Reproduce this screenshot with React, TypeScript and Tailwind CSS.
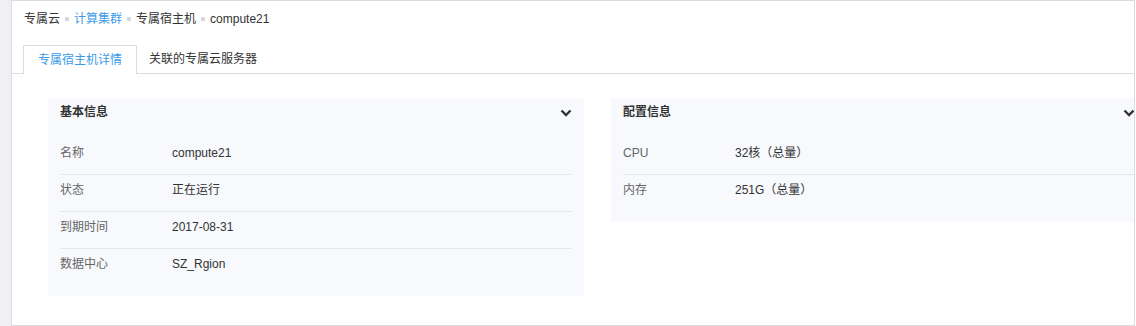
import React from "react";

type Row = { label: string; value: string };

const basicRows: Row[] = [
  { label: "名称", value: "compute21" },
  { label: "状态", value: "正在运行" },
  { label: "到期时间", value: "2017-08-31" },
  { label: "数据中心", value: "SZ_Rgion" },
];

const configRows: Row[] = [
  { label: "CPU", value: "32核（总量）" },
  { label: "内存", value: "251G（总量）" },
];

function Chevron() {
  return (
    <svg width="12" height="8" viewBox="0 0 12 8" className="shrink-0">
      <polyline
        points="1.5,1.5 6,6 10.5,1.5"
        fill="none"
        stroke="#333"
        strokeWidth="2.4"
      />
    </svg>
  );
}

function Dot() {
  return <span className="mx-[5px] inline-block h-[4px] w-[4px] rounded-[1px] bg-[#d3d6db]" />;
}

function InfoCard({ title, rows }: { title: string; rows: Row[] }) {
  return (
    <section className="w-[536px] shrink-0 bg-[#f7f9fc] px-[12px] pb-[11px]">
      {/* header */}
      <div className="flex h-[40px] items-start justify-between pt-[4px]">
        <h3 className="text-[12px] font-bold leading-[20px] text-[#333]">{title}</h3>
        <div className="pt-[7px]">
          <Chevron />
        </div>
      </div>
      {rows.map((r, i) => (
        <div
          key={r.label}
          className={`flex pt-[5px] pb-[11px] text-[12px] leading-[20px] ${
            i < rows.length - 1 ? "border-b border-[#e3e6ec]" : ""
          }`}
        >
          <span className="w-[112px] shrink-0 text-[#666]">{r.label}</span>
          <span className="text-[#333]">{r.value}</span>
        </div>
      ))}
    </section>
  );
}

export default function App() {
  return (
    <div
      className="flex h-[326px] w-[1136px] bg-white"
      style={{ fontFamily: '"Liberation Sans", "Noto Sans CJK SC", sans-serif' }}
    >
      <div className="w-[11px] shrink-0 bg-[#eef0f3]" />
      <main className="flex h-[326px] w-[1124px] shrink-0 flex-col overflow-hidden border border-[#dcdcdc]">
        {/* breadcrumb */}
        <nav className="flex items-center pl-[12px] pt-[8px] text-[12px] leading-[20px] text-[#333]">
          <span>专属云</span>
          <Dot />
          <span className="text-[#3d9be6]">计算集群</span>
          <Dot />
          <span>专属宿主机</span>
          <Dot />
          <span>compute21</span>
        </nav>

        {/* tabs */}
        <div className="mt-[16px] flex border-b border-[#dcdcdc] pl-[11px] text-[12px] leading-[20px]">
          <div className="-mb-px flex h-[29px] items-center border border-b-0 border-[#dcdcdc] bg-white px-[14px] text-[#3d9be6]">
            专属宿主机详情
          </div>
          <div className="flex h-[28px] items-center pl-[12px] pr-[14px] text-[#333]">关联的专属云服务器</div>
        </div>

        {/* cards */}
        <div className="mt-[24px] flex items-start gap-[27px] pl-[36px]">
          <InfoCard title="基本信息" rows={basicRows} />
          <InfoCard title="配置信息" rows={configRows} />
        </div>
      </main>
    </div>
  );
}
